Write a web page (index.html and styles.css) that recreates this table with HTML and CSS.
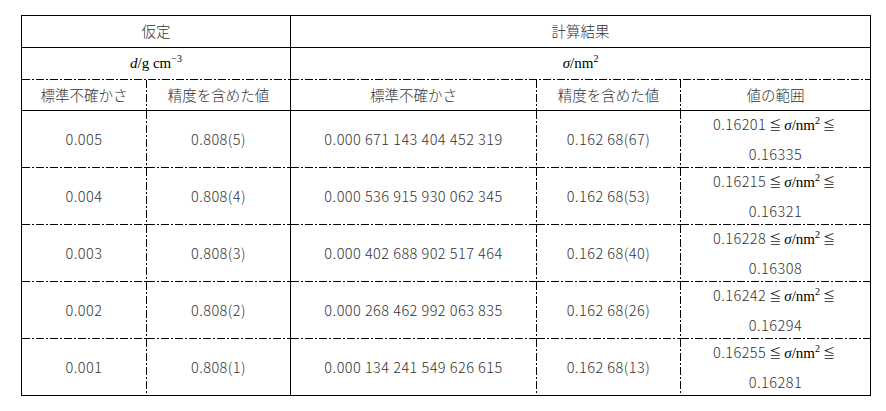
FILE: index.html
```html
<!DOCTYPE html>
<html lang="ja">
<head>
<meta charset="utf-8">
<link rel="stylesheet" href="styles.css">
</head>
<body>
<div class="tbl">
  <div class="c span2 sb">仮定</div>
  <div class="c span3 sb lastcol">計算結果</div>

  <div class="c span2 ddb serif"><span><i>d</i>/g cm<sup>−3</sup></span></div>
  <div class="c span3 ddb lastcol serif"><span><i>σ</i>/nm<sup>2</sup></span></div>

  <div class="c sb ddr">標準不確かさ</div>
  <div class="c sb sr">精度を含めた値</div>
  <div class="c sb ddr">標準不確かさ</div>
  <div class="c sb ddr">精度を含めた値</div>
  <div class="c sb lastcol">値の範囲</div>

  <div class="c ddb ddr row">0.005</div>
  <div class="c ddb sr row">0.808(5)</div>
  <div class="c ddb ddr row">0.000 671 143 404 452 319</div>
  <div class="c ddb ddr row">0.162 68(67)</div>
  <div class="c ddb lastcol row range"><span>0.16201<span class="le">≦</span><span class="serif"><i>σ</i>/nm<sup>2</sup></span><span class="le">≦</span></span><span>0.16335</span></div>

  <div class="c ddb ddr row">0.004</div>
  <div class="c ddb sr row">0.808(4)</div>
  <div class="c ddb ddr row">0.000 536 915 930 062 345</div>
  <div class="c ddb ddr row">0.162 68(53)</div>
  <div class="c ddb lastcol row range"><span>0.16215<span class="le">≦</span><span class="serif"><i>σ</i>/nm<sup>2</sup></span><span class="le">≦</span></span><span>0.16321</span></div>

  <div class="c ddb ddr row">0.003</div>
  <div class="c ddb sr row">0.808(3)</div>
  <div class="c ddb ddr row">0.000 402 688 902 517 464</div>
  <div class="c ddb ddr row">0.162 68(40)</div>
  <div class="c ddb lastcol row range"><span>0.16228<span class="le">≦</span><span class="serif"><i>σ</i>/nm<sup>2</sup></span><span class="le">≦</span></span><span>0.16308</span></div>

  <div class="c ddb ddr row">0.002</div>
  <div class="c ddb sr row">0.808(2)</div>
  <div class="c ddb ddr row">0.000 268 462 992 063 835</div>
  <div class="c ddb ddr row">0.162 68(26)</div>
  <div class="c ddb lastcol row range"><span>0.16242<span class="le">≦</span><span class="serif"><i>σ</i>/nm<sup>2</sup></span><span class="le">≦</span></span><span>0.16294</span></div>

  <div class="c sb ddr row">0.001</div>
  <div class="c sb sr row">0.808(1)</div>
  <div class="c sb ddr row">0.000 134 241 549 626 615</div>
  <div class="c sb ddr row">0.162 68(13)</div>
  <div class="c sb lastcol row range"><span>0.16255<span class="le">≦</span><span class="serif"><i>σ</i>/nm<sup>2</sup></span><span class="le">≦</span></span><span>0.16281</span></div>
</div>
</body>
</html>
```
FILE: styles.css
```css
html, body {
  margin: 0;
  padding: 0;
  background: #fff;
}
body {
  padding: 15px 0 0 21px;
  font-family: "Noto Sans CJK JP", "Noto Sans", sans-serif;
  font-size: 14.5px;
  font-weight: 300;
  color: #333;
}
.tbl {
  display: grid;
  width: 849px;
  grid-template-columns: 125px 144px 246px 144px 190px;
  grid-template-rows: 32px 32px 31px 57px 57px 57px 57px 57px;
  border-left: 1px solid #000;
  border-top: 1px solid #000;
}
.c {
  box-sizing: border-box;
  display: flex;
  align-items: center;
  justify-content: center;
  line-height: 1;
  white-space: nowrap;
  background-repeat: no-repeat;
}
.row { letter-spacing: 0.45px; }
.span2 { grid-column: span 2; border-right: 1px solid #000; }
.span3 { grid-column: span 3; }
.lastcol { border-right: 1px solid #000; }
.sb { border-bottom: 1px solid #000; }
.sr { border-right: 1px solid #000; }

/* dash-dot bottom line */
.ddb {
  background-image: repeating-linear-gradient(90deg, #000 0 8px, transparent 8px 10px, #000 10px 12px, transparent 12px 14px);
  background-position: left bottom;
  background-size: 100% 1px;
  padding-bottom: 1px;
}
/* dash-dot right line */
.ddr {
  background-image: repeating-linear-gradient(180deg, #000 0 8px, transparent 8px 10px, #000 10px 12px, transparent 12px 14px);
  background-position: right top;
  background-size: 1px 100%;
  padding-right: 1px;
}
.ddb.ddr {
  background-image:
    repeating-linear-gradient(90deg, #000 0 8px, transparent 8px 10px, #000 10px 12px, transparent 12px 14px),
    repeating-linear-gradient(180deg, #000 0 8px, transparent 8px 10px, #000 10px 12px, transparent 12px 14px);
  background-position: left bottom, right top;
  background-size: 100% 1px, 1px 100%;
}
.serif {
  font-family: "Liberation Serif", "Times New Roman", serif;
  font-weight: 400;
  color: #000;
  font-size: 15px;
  letter-spacing: 0;
}
.serif i { font-style: italic; }
.serif sup {
  font-size: 10px;
  vertical-align: 6px;
  line-height: 0;
}
.range {
  flex-direction: column;
  line-height: 28px;
}
.range .serif { font-size: 15px; }
.le {
  font-family: "DejaVu Serif", "Noto Sans CJK JP", serif;
  font-weight: 400;
  font-size: 12px;
  color: #222;
  margin: 0 3px;
  letter-spacing: 0;
}
```
